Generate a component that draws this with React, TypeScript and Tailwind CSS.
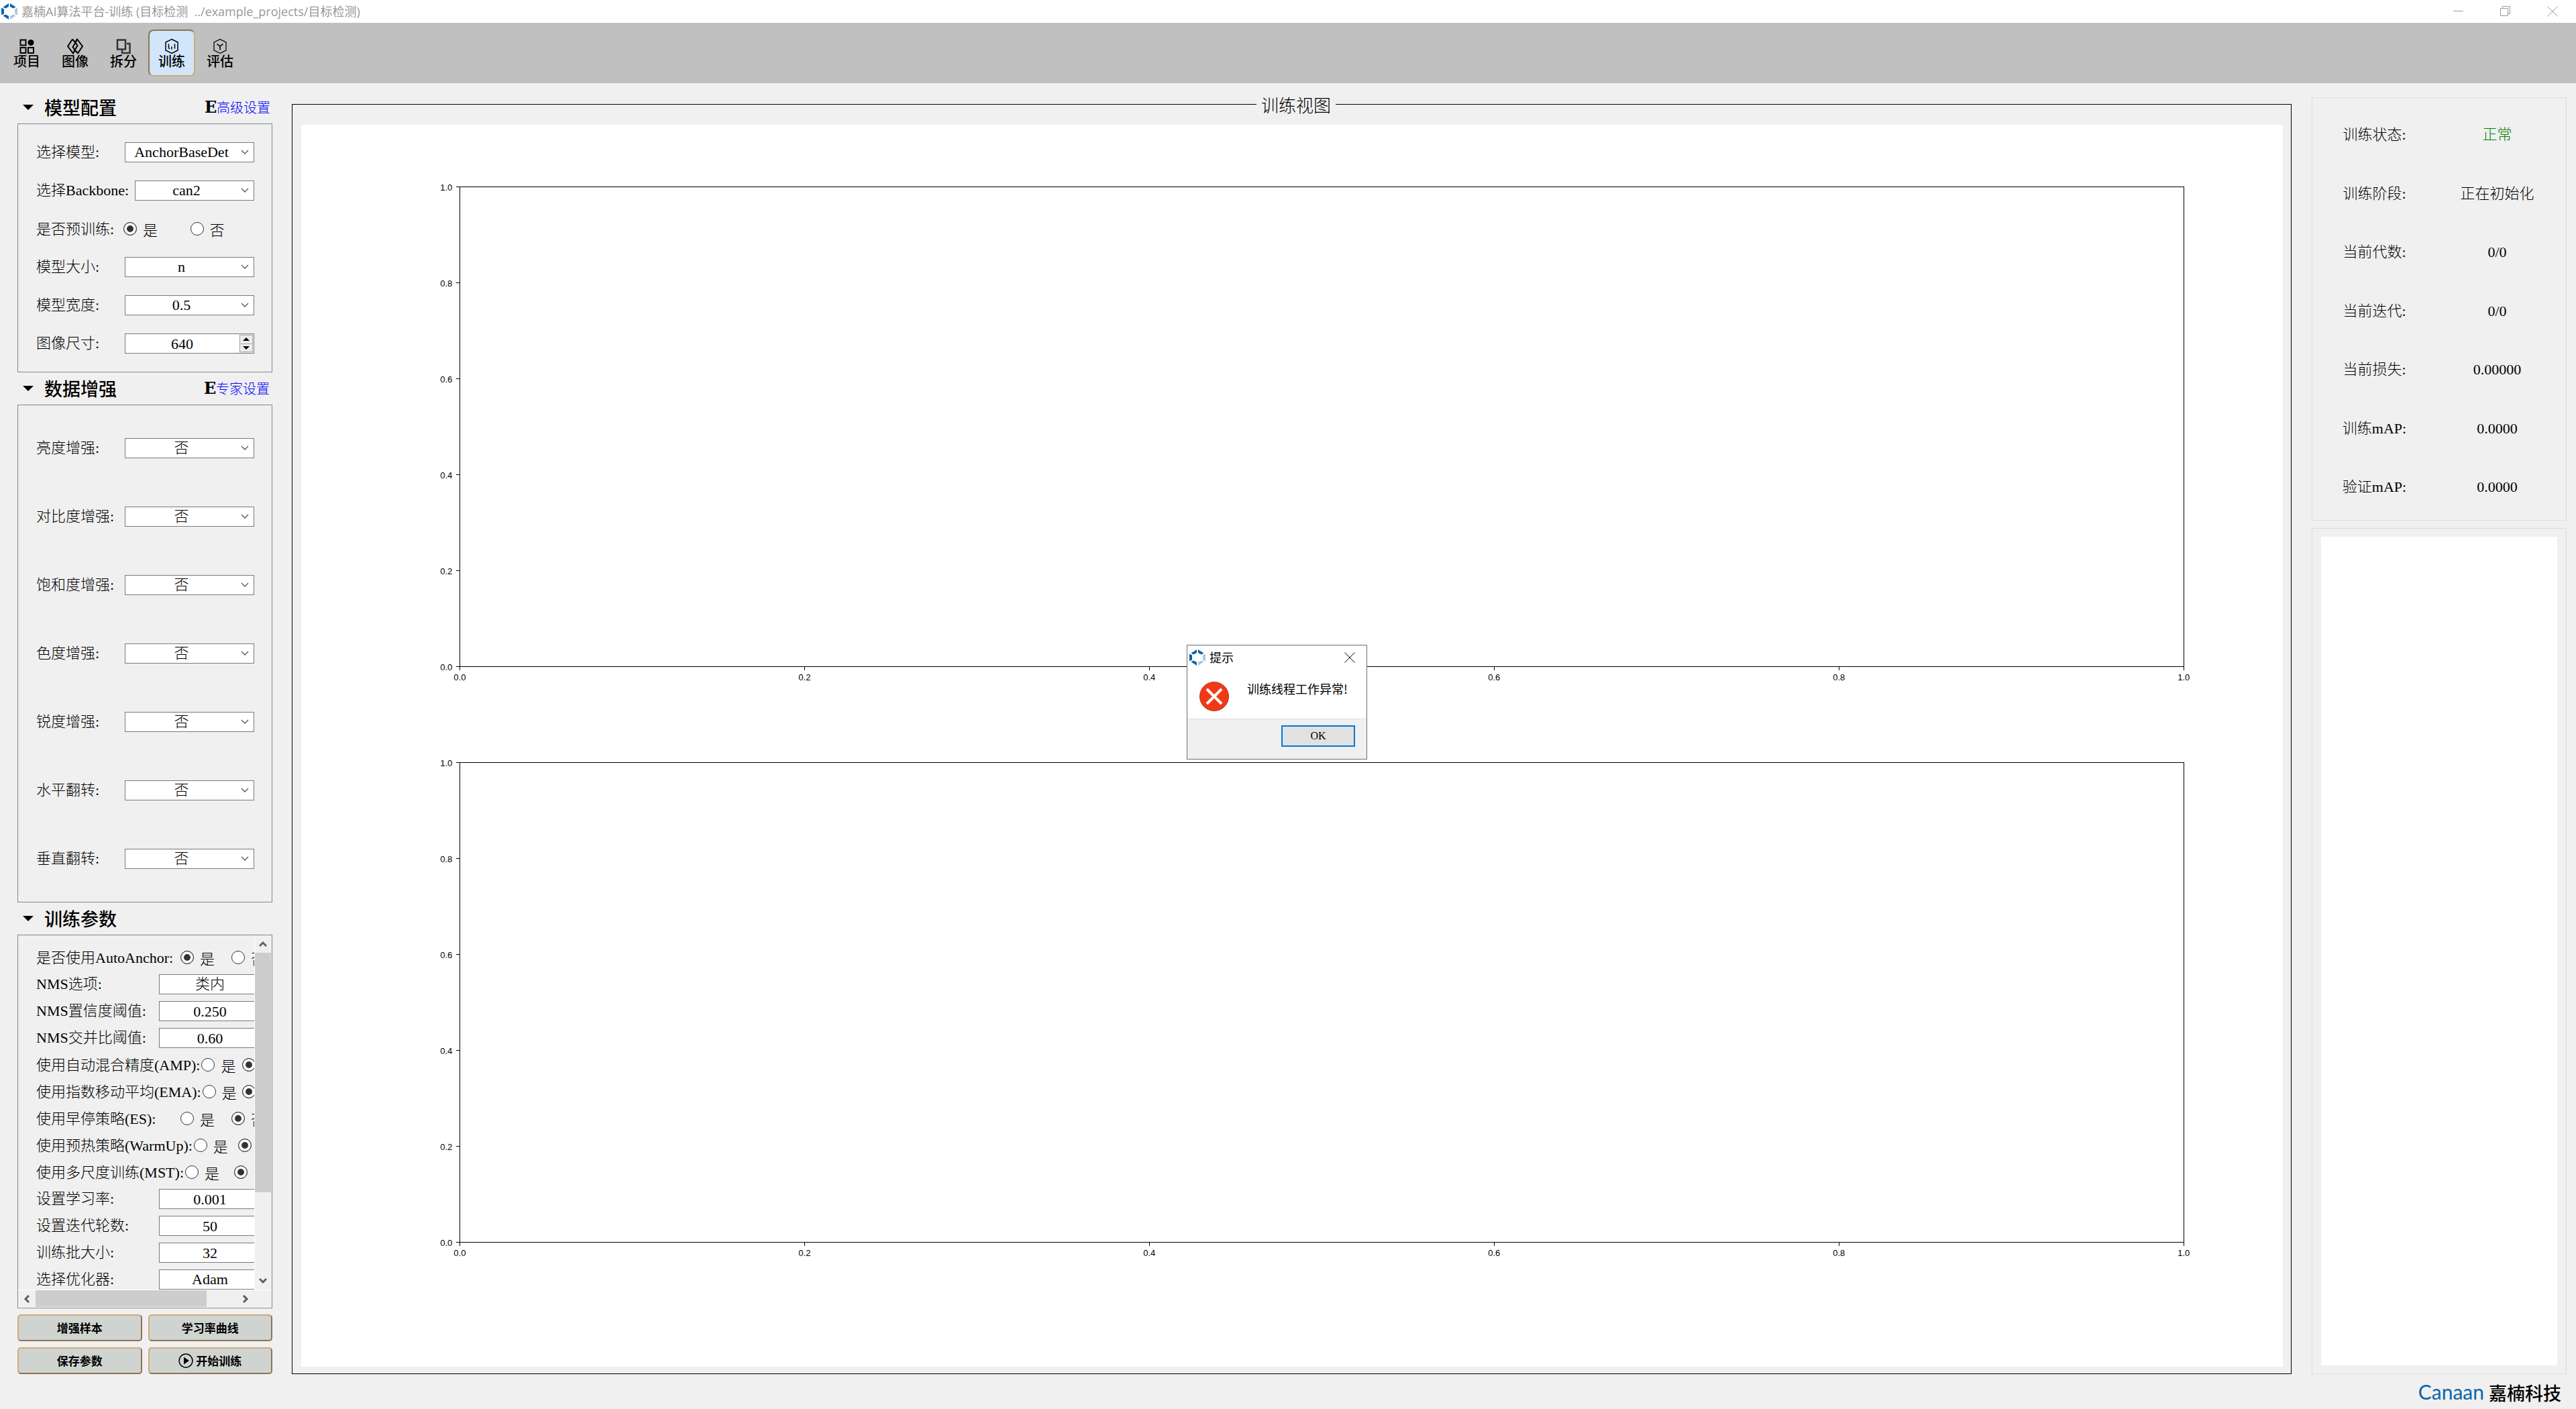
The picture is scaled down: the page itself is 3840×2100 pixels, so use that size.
import React, { useState } from 'react';

const TICKS = [0, 0.2, 0.4, 0.6, 0.8, 1];

const AUGMENTATIONS = ['亮度增强:', '对比度增强:', '饱和度增强:', '色度增强:', '锐度增强:', '水平翻转:', '垂直翻转:'];

type ParamRow =
    | { kind: 'radio'; name: string; label: string; value: boolean }
    | { kind: 'select' | 'input'; name: string; label: string; value: string };

const PARAMS: ParamRow[] = [
    { kind: 'radio', name: 'auto-anchor', label: '是否使用AutoAnchor:', value: true },
    { kind: 'select', name: 'nms-type', label: 'NMS选项:', value: '类内' },
    { kind: 'input', name: 'nms-conf', label: 'NMS置信度阈值:', value: '0.250' },
    { kind: 'input', name: 'nms-iou', label: 'NMS交并比阈值:', value: '0.60' },
    { kind: 'radio', name: 'amp', label: '使用自动混合精度(AMP):', value: false },
    { kind: 'radio', name: 'ema', label: '使用指数移动平均(EMA):', value: false },
    { kind: 'radio', name: 'es', label: '使用早停策略(ES):', value: false },
    { kind: 'radio', name: 'warmup', label: '使用预热策略(WarmUp):', value: false },
    { kind: 'radio', name: 'mst', label: '使用多尺度训练(MST):', value: false },
    { kind: 'input', name: 'lr', label: '设置学习率:', value: '0.001' },
    { kind: 'input', name: 'epochs', label: '设置迭代轮数:', value: '50' },
    { kind: 'input', name: 'batch', label: '训练批大小:', value: '32' },
    { kind: 'select', name: 'optimizer', label: '选择优化器:', value: 'Adam' },
];

const STATUS = [
    { label: '训练状态:', value: '正常', ok: true },
    { label: '训练阶段:', value: '正在初始化' },
    { label: '当前代数:', value: '0/0' },
    { label: '当前迭代:', value: '0/0' },
    { label: '当前损失:', value: '0.00000' },
    { label: '训练mAP:', value: '0.0000' },
    { label: '验证mAP:', value: '0.0000' },
];

// Latin comes from the serif, Chinese falls through to Noto
const FORM_TEXT = "text-[22px] font-light font-['Liberation_Serif','Noto_Sans_CJK_SC',sans-serif]";

const Logo: React.FC = () => (
    <svg viewBox="0 0 24 24" className="w-6 h-6 shrink-0">
        <path fill="#0a62ab" d="M2.500 5.500L11 0v5L6 7.500zM21.500 5.500L13 0v5l5 2.500zM0 6.500l4 2v7l-4 2zM2.500 18.500L11 24v-5l-5-2.500z" />
        <path fill="#a9c8e8" d="M24 6.500l-4 2v7l4 2zM21.500 18.500L13 24v-5l5-2.500z" />
    </svg>
);

const Select: React.FC<{ id: string; value: string; className?: string }> = ({ id, value, className = '' }) => (
    <div className={`relative h-[30px] ${className}`}>
        <select
            id={id}
            defaultValue={value}
            className={`block w-full h-full appearance-none border border-[#7a7a7a] bg-white pl-0 pr-6 text-center [text-align-last:center] leading-[28px] ${FORM_TEXT}`}
        >
            <option value={value}>{value}</option>
        </select>
        <svg viewBox="0 0 12 8" className="absolute right-2 top-[11px] w-3 h-2 pointer-events-none" fill="none" stroke="#555" strokeWidth="1.3">
            <path d="M1 1l5 5 5-5" />
        </svg>
    </div>
);

const YesNo: React.FC<{ name: string; value: boolean }> = ({ name, value }) => (
    <>
        {[true, false].map(option => (
            <label key={String(option)} className="flex flex-1 items-center gap-[9px] text-[22px] font-light">
                <input
                    type="radio"
                    name={name}
                    defaultChecked={option === value}
                    className="appearance-none w-5 h-5 shrink-0 rounded-full border border-[#333] bg-white checked:bg-[#333] checked:shadow-[inset_0_0_0_4px_#fff]"
                />
                {option ? '是' : '否'}
            </label>
        ))}
    </>
);

const SectionHeader: React.FC<{ title: string; children?: React.ReactNode }> = ({ title, children }) => (
    <div className="flex items-center h-8 mb-[7px] pl-2 pb-[3px]">
        <svg viewBox="0 0 16 8" className="w-4 h-2 mr-4">
            <path d="M0 0h16L8 8z" />
        </svg>
        <h2 className="text-[27px] leading-7 font-medium">{title}</h2>
        {children}
    </div>
);

const Badge: React.FC = () => (
    <span className="ml-auto w-[18px] text-[24px] leading-7 font-bold font-['DejaVu_Serif',serif]">E</span>
);

const FormRow: React.FC<{ id?: string; label: string; children: React.ReactNode }> = ({ id, label, children }) => (
    <div className="flex items-center h-[30px]">
        <label htmlFor={id} className={`min-w-[132px] leading-[30px] ${FORM_TEXT}`}>{label}</label>
        {children}
    </div>
);

const ModelConfig: React.FC = () => (
    <section className="mb-[9px]">
        <SectionHeader title="模型配置">
            <Badge />
            <a href="#advanced" className="w-[81px] mr-[2px] text-[20px] leading-7 font-light text-[#0000ff] whitespace-nowrap">高级设置</a>
        </SectionHeader>
        <div className="flex flex-col gap-[27px] border border-[#828790] py-[27px] pl-[27px] pr-[26px]">
            <FormRow id="model" label="选择模型:"><Select id="model" value="AnchorBaseDet" className="flex-1" /></FormRow>
            <FormRow id="backbone" label="选择Backbone:"><Select id="backbone" value="can2" className="ml-[9px] flex-1" /></FormRow>
            <div className="flex items-center h-[30px] -mr-1">
                <span className={`w-[130px] ${FORM_TEXT}`}>是否预训练:</span>
                <YesNo name="pretrained" value={true} />
            </div>
            <FormRow id="size" label="模型大小:"><Select id="size" value="n" className="flex-1" /></FormRow>
            <FormRow id="width" label="模型宽度:"><Select id="width" value="0.5" className="flex-1" /></FormRow>
            <FormRow id="image-size" label="图像尺寸:">
                <div className="flex flex-1 min-w-0 h-[30px] border border-[#7a7a7a] bg-white">
                    <input id="image-size" type="text" inputMode="numeric" defaultValue="640" className={`flex-1 min-w-0 text-center ${FORM_TEXT}`} />
                    <div className="flex flex-col w-[22px] p-px bg-[#f0f0f0]">
                        <button aria-label="增加" className="flex flex-1 items-center justify-center border border-[#acacac] bg-[#ececec]">
                            <svg viewBox="0 0 10 5" className="w-[10px] h-[5px]"><path d="M5 0l5 5H0z" /></svg>
                        </button>
                        <button aria-label="减少" className="flex flex-1 items-center justify-center border border-t-0 border-[#acacac] bg-[#ececec]">
                            <svg viewBox="0 0 10 5" className="w-[10px] h-[5px]"><path d="M0 0h10L5 5z" /></svg>
                        </button>
                    </div>
                </div>
            </FormRow>
        </div>
    </section>
);

const Augmentation: React.FC = () => (
    <section className="mb-[9px]">
        <SectionHeader title="数据增强">
            <Badge />
            <a href="#expert" className="w-[81px] mr-[3px] text-[20px] leading-7 font-light text-[#0000ff] whitespace-nowrap">专家设置</a>
        </SectionHeader>
        <div className="flex flex-col gap-[72px] border border-[#828790] py-[49px] pl-[27px] pr-[26px]">
            {AUGMENTATIONS.map((label, i) => (
                <FormRow key={label} id={`aug-${i}`} label={label}>
                    <Select id={`aug-${i}`} value="否" className="flex-1" />
                </FormRow>
            ))}
        </div>
    </section>
);

const Param: React.FC<{ row: ParamRow }> = ({ row }) => {
    if (row.kind === 'radio') {
        return (
            <div className="flex items-center w-[367px] h-[30px]">
                <span className={`min-w-[215px] pr-[2px] shrink-0 ${FORM_TEXT}`}>{row.label}</span>
                <YesNo name={row.name} value={row.value} />
            </div>
        );
    }
    return (
        <div className="flex items-center w-[367px] h-[30px]">
            <label htmlFor={row.name} className={`w-[183px] shrink-0 leading-[30px] ${FORM_TEXT}`}>{row.label}</label>
            {row.kind === 'select'
                ? <Select id={row.name} value={row.value} className="w-[176px]" />
                : <input
                    id={row.name}
                    type="text"
                    defaultValue={row.value}
                    className={`w-[176px] h-[30px] border border-[#7a7a7a] bg-white pr-6 text-center ${FORM_TEXT}`}
                />}
        </div>
    );
};

const Arrow: React.FC<{ d: string }> = ({ d }) => (
    <svg viewBox="0 0 12 12" className="w-3 h-3" fill="none" stroke="#606060" strokeWidth="3">
        <path d={d} />
    </svg>
);

const TrainParams: React.FC = () => (
    <section>
        <SectionHeader title="训练参数" />
        <div className="border border-[#828790]">
            <div className="flex">
                <div className="flex-1 min-w-0 overflow-hidden border-r border-white">
                    <div className="flex flex-col gap-[10px] pt-[18px] pl-[27px]">
                        {PARAMS.map(row => <Param key={row.name} row={row} />)}
                    </div>
                </div>
                <div className="flex flex-col w-[25px] pr-px">
                    <button aria-label="向上滚动" className="flex items-center justify-center h-[26px]"><Arrow d="M1 9l5-5 5 5" /></button>
                    <div className="h-[357px] bg-[#cdcdcd]" />
                    <button aria-label="向下滚动" className="flex items-center justify-center h-[26px] mt-auto"><Arrow d="M1 3l5 5 5-5" /></button>
                </div>
            </div>
            <div className="flex h-[27px] border-y border-white pr-[26px]">
                <button aria-label="向左滚动" className="flex items-center justify-center w-[26px]"><Arrow d="M9 1L4 6l5 5" /></button>
                <div className="w-[255px] bg-[#cdcdcd]" />
                <button aria-label="向右滚动" className="flex items-center justify-center w-[26px] ml-auto"><Arrow d="M3 1l5 5-5 5" /></button>
            </div>
        </div>
    </section>
);

const ActionButton: React.FC<{ children: React.ReactNode }> = ({ children }) => (
    <button className="flex items-center justify-center gap-1 h-10 rounded-[5px] border-2 border-t-[#d0ab78] border-l-[#d0ab78] border-r-[#8d7452] border-b-[#8d7452] bg-[#d0d4d0] text-[17px] font-bold">
        {children}
    </button>
);

const TABS = [
    {
        label: '项目',
        icon: (
            <g fill="none" stroke="#000" strokeWidth="2">
                <rect x="2.500" y="2.500" width="8" height="8" />
                <circle cx="18" cy="6.500" r="4.500" fill="#000" stroke="none" />
                <rect x="2.500" y="14" width="8" height="8" />
                <rect x="14" y="14" width="8" height="8" />
            </g>
        ),
    },
    {
        label: '图像',
        icon: (
            <g fill="none" stroke="#000" strokeWidth="2">
                <path d="M8 1.500L1 12l8 10.500 3-4.500-3.500-5L14 4" />
                <path d="M16 22.500L23 12 15 1.500 12 6l3.500 5L10 20" />
                <path d="M8 1.500l4 4.500M16 22.500L12 18" />
            </g>
        ),
    },
    {
        label: '拆分',
        icon: (
            <g fill="none" stroke="#333" strokeWidth="2.500">
                <rect x="3" y="2.500" width="12" height="14" />
                <path d="M17 8h4.500v14H10v-4" />
            </g>
        ),
    },
    {
        label: '训练',
        icon: (
            <g fill="none" stroke="#000" strokeWidth="1.500">
                <path d="M12 1.500l9 4.500v12l-9 4.500L3 18V6z" />
                <path d="M7.500 8.500v6l1.500 1.500M12 12.500v4M16.500 8.500v7" />
            </g>
        ),
    },
    {
        label: '评估',
        icon: (
            <g fill="none" stroke="#222" strokeWidth="1.500">
                <path d="M12 1.500l9 4.500v12l-9 4.500L3 18V6z" />
                <path d="M7.500 8.500L12 12l4.500-3.500M12 12v5.500" strokeWidth="2" />
            </g>
        ),
    },
];

const Toolbar: React.FC = () => {
    const [active, setActive] = useState('训练');

    return (
        <nav className="flex gap-[2px] h-[90px] bg-[#c0c0c0] pt-[10px] pl-[5px]">
            {TABS.map(tab => (
                <button
                    key={tab.label}
                    onClick={() => setActive(tab.label)}
                    className={`flex flex-col items-center w-[70px] h-[70px] rounded-lg border-2 pt-[11px] text-[20px] leading-5 font-medium ${active === tab.label
                        ? 'bg-[#d1e5fb] border-t-[#8d7452] border-l-[#8d7452] border-r-[#d0ab78] border-b-[#d0ab78]'
                        : 'border-transparent'
                        }`}
                >
                    <svg viewBox="0 0 24 24" className="w-6 h-6">{tab.icon}</svg>
                    {tab.label}
                </button>
            ))}
        </nav>
    );
};

const Plot: React.FC<{ y: string }> = ({ y }) => (
    <svg x="8%" y={y} width="87%" height="38.636%" overflow="visible">
        <rect width="100%" height="100%" fill="none" stroke="#000" strokeWidth="1" shapeRendering="crispEdges" />
        {TICKS.map(tick => {
            const x = `${tick * 100}%`;
            const top = `${100 - tick * 100}%`;
            return (
                <g key={tick} stroke="#000" shapeRendering="crispEdges">
                    <line x1="-5" x2="0" y1={top} y2={top} />
                    <text x="-11" y={top} dy="5" textAnchor="end" stroke="none">{tick.toFixed(1)}</text>
                    <svg x={x} y="100%" overflow="visible">
                        <line x1="0" x2="0" y1="0" y2="5" />
                        <text x="0" y="20" textAnchor="middle" stroke="none">{tick.toFixed(1)}</text>
                    </svg>
                </g>
            );
        })}
    </svg>
);

const TrainView: React.FC = () => (
    <section className="flex flex-col flex-1 min-w-0 -mt-[3px]">
        <div className="flex h-8">
            <div className="mt-[13px] grow basis-[14px] border-t border-l border-black" />
            <h2 className="px-[7px] text-[26px] leading-7 font-light">训练视图</h2>
            <div className="mt-[13px] grow basis-0 border-t border-r border-black" />
        </div>
        <div className="flex flex-1 border-x border-b border-black pt-3 pb-[10px] pl-[13px] pr-3">
            <svg width="100%" height="100%" className="flex-1 bg-white text-[13px] font-['Liberation_Sans',sans-serif]">
                <Plot y="5%" />
                <Plot y="51.364%" />
            </svg>
        </div>
    </section>
);

const StatusPanel: React.FC = () => (
    <aside className="grid grid-rows-[1fr_2fr] gap-[11px] w-[380px] shrink-0">
        <dl className={`flex flex-col border border-[#dcdcdc] pt-[11px] pb-[5px] pl-px pr-[11px] ${FORM_TEXT}`}>
            {STATUS.map(item => (
                <div key={item.label} className="grid grid-cols-2 flex-1 items-center text-center">
                    <dt>{item.label}</dt>
                    <dd className={item.ok ? 'text-[#008000]' : ''}>{item.value}</dd>
                </div>
            ))}
        </dl>
        <div className="flex border border-[#dcdcdc] py-3 px-[13px]">
            <textarea aria-label="训练日志" readOnly className="flex-1 min-w-0 resize-none bg-white" />
        </div>
    </aside>
);

const ErrorDialog: React.FC<{ onClose: () => void }> = ({ onClose }) => (
    <div role="alertdialog" aria-label="提示" className="absolute left-[1769px] top-[961px] w-[269px] border border-[#6e7073] bg-white">
        <div className="flex items-center h-9 pl-[3px] pr-[17px]">
            <Logo />
            <span className="ml-[6px] pb-[2px] text-[18px] leading-6">提示</span>
            <button aria-label="关闭" onClick={onClose} className="ml-auto">
                <svg viewBox="0 0 16 16" className="w-4 h-4" fill="none" stroke="#000" strokeWidth="1"><path d="M.5.5l15 15M15.500.5l-15 15" /></svg>
            </button>
        </div>
        <div className="flex items-start h-[73px] pt-[18px] pl-[18px]">
            <svg viewBox="0 0 44 44" className="w-11 h-11 shrink-0">
                <circle cx="22" cy="22" r="21.500" fill="#f03a17" stroke="#b3301a" />
                <path d="M11 11l22 22M33 11L11 33" stroke="#fff" strokeWidth="4" />
            </svg>
            <p className="ml-[27px] text-[18px] leading-5 whitespace-nowrap">训练线程工作异常!</p>
        </div>
        <div className="flex justify-end h-[60px] border-t border-[#dfdfdf] bg-[#f0f0f0] pt-[9px] pr-[17px]">
            <button onClick={onClose} className="w-[110px] h-8 border-2 border-[#0078d7] bg-[#e1e1e1] text-[16px] font-['Liberation_Serif',serif]">OK</button>
        </div>
    </div>
);

const TitleBar: React.FC = () => (
    <header className="flex items-center h-[34px] bg-white pl-[2px]">
        <Logo />
        <h1 className="ml-[6px] text-[18px] text-[#999999] whitespace-pre font-['Open_Sans','Noto_Sans_CJK_SC',sans-serif]">
            嘉楠AI算法平台-训练 (目标检测  ../example_projects/目标检测)
        </h1>
        <div className="flex h-full ml-auto">
            <button aria-label="最小化" className="flex items-center justify-center w-[70px]">
                <svg viewBox="0 0 16 16" className="w-4 h-4" fill="none" stroke="#999"><path d="M0 7.500h15" /></svg>
            </button>
            <button aria-label="还原" className="flex items-center justify-center w-[70px]">
                <svg viewBox="0 0 16 16" className="w-4 h-4" fill="none" stroke="#999"><path d="M.5 3.500h11v11H.5zM3.500 3.500v-3h11v11h-3" /></svg>
            </button>
            <button aria-label="关闭窗口" className="flex items-center justify-center w-[70px]">
                <svg viewBox="0 0 16 16" className="w-4 h-4" fill="none" stroke="#999"><path d="M.5.5l15 15M15.500.5l-15 15" /></svg>
            </button>
        </div>
    </header>
);

const App: React.FC = () => {
    const [dialogOpen, setDialogOpen] = useState(true);

    return (
        <div className="relative flex flex-col min-h-screen bg-[#f0f0f0] text-black font-['Noto_Sans_CJK_SC',sans-serif]">
            <TitleBar />
            <Toolbar />
            <main className="flex flex-1 pt-[21px] pl-[26px] pr-[14px]">
                {/* Left sidebar */}
                <div className="w-[380px] shrink-0 mr-[29px]">
                    <ModelConfig />
                    <Augmentation />
                    <TrainParams />
                    <div className="grid grid-cols-2 gap-[9px] mt-[9px]">
                        <ActionButton>增强样本</ActionButton>
                        <ActionButton>学习率曲线</ActionButton>
                        <ActionButton>保存参数</ActionButton>
                        <ActionButton>
                            <svg viewBox="0 0 22 22" className="w-[22px] h-[22px]">
                                <circle cx="11" cy="11" r="10" fill="none" stroke="#000" strokeWidth="1.500" />
                                <path d="M8 5.500l8 5.500-8 5.500z" />
                            </svg>
                            开始训练
                        </ActionButton>
                    </div>
                </div>
                <TrainView />
                <div className="flex ml-[30px]">
                    <StatusPanel />
                </div>
            </main>
            <footer className="flex items-center justify-end h-[52px] pr-[22px]">
                <span className="text-[30px] leading-8 text-[#0a66ad] font-['Lato',sans-serif]">Canaan</span>
                <span className="ml-[7px] mt-1 text-[27px] leading-8 font-medium">嘉楠科技</span>
            </footer>
            {dialogOpen && <ErrorDialog onClose={() => setDialogOpen(false)} />}
        </div>
    );
};

export default App;
